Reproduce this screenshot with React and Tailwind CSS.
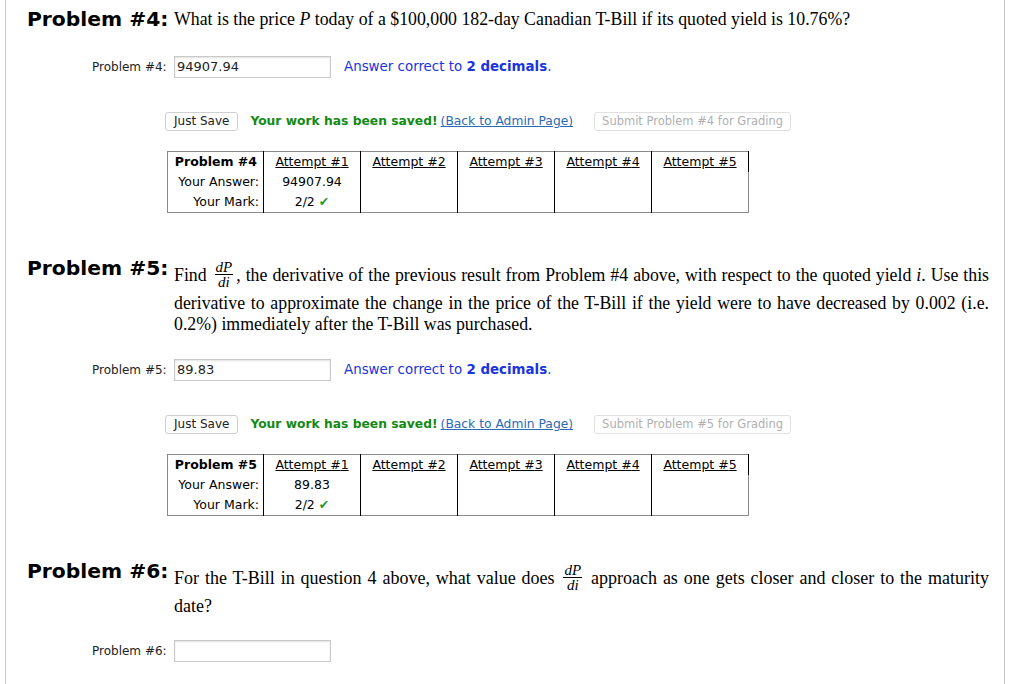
import React from "react";

const sans = { fontFamily: '"DejaVu Sans", Verdana, sans-serif' };
const serif = { fontFamily: '"Liberation Serif", "Times New Roman", serif' };

const Frac = ({ tall }) => (
  <span
    className={`mx-[3px] inline-flex flex-col items-center align-[9px] text-[15px] italic leading-[12px] ${
      tall ? "pb-[5px]" : ""
    }`}
  >
    <span className="border-b border-black px-[1px] pb-[1px]">dP</span>
    <span className="px-[1px] pt-[1px]">di</span>
  </span>
);

const Heading = ({ children }) => (
  <h2
    className="w-[147px] shrink-0 text-[20.3px] font-bold leading-[26px] text-black"
    style={sans}
  >
    {children}
  </h2>
);

const AnswerRow = ({ n, value, hint }) => (
  <div className="flex items-center pl-[65px]" style={sans}>
    <span className="w-[82px] text-[12px] text-[#222]">Problem #{n}:</span>
    <div className="flex h-[22px] w-[157px] items-center border border-[#c9c9c9] bg-white pl-[2px] text-[13px] text-[#222] shadow-[inset_0_1px_2px_rgba(0,0,0,0.12)]">
      {value}
    </div>
    {hint && (
      <span className="ml-[13px] text-[13.4px] text-[#1a33e0]">
        Answer correct to <b>2 decimals</b>.
      </span>
    )}
  </div>
);

const SaveRow = ({ n }) => (
  <div className="mt-[34px] flex items-center pl-[138px] text-[12.3px]" style={sans}>
    <button className="h-[19px] rounded-[3px] border border-[#cfcfcf] bg-white px-[8px] text-[12px] leading-[17px] text-[#222]">
      Just Save
    </button>
    <span className="ml-[12px] font-bold text-[#138a13]">Your work has been saved!</span>
    <a className="ml-[3px] text-[#2a6bb8] underline" href="#">
      (Back to Admin Page)
    </a>
    <button
      disabled
      className="ml-[21px] h-[19px] rounded-[3px] border border-[#e0e0e0] bg-white px-[7px] text-[11.5px] leading-[17px] text-[#b0b0b0]"
    >
      Submit Problem #{n} for Grading
    </button>
  </div>
);

const AttemptTable = ({ n, value }) => (
  <table
    className="ml-[140px] mt-[20px] border-collapse border border-[#8a8a8a] text-[12.5px] leading-[20px] text-black"
    style={sans}
  >
    <tbody>
      <tr>
        <td className="w-[96px] border-r border-black pr-[6px] text-right font-bold">Problem #{n}</td>
        {[1, 2, 3, 4, 5].map((a) => (
          <td key={a} className="w-[97px] border-r border-black text-center align-top">
            <span className="underline">Attempt #{a}</span>
          </td>
        ))}
      </tr>
      <tr>
        <td className="border-r border-black pr-[4px] text-right">Your Answer:</td>
        <td className="border-r border-black text-center">{value}</td>
        <td className="border-r border-black" />
        <td className="border-r border-black" />
        <td className="border-r border-black" />
        <td />
      </tr>
      <tr>
        <td className="border-r border-black pr-[4px] text-right">Your Mark:</td>
        <td className="border-r border-black text-center">
          2/2 <span className="text-[#1f9a1f]">✔</span>
        </td>
        <td className="border-r border-black" />
        <td className="border-r border-black" />
        <td className="border-r border-black" />
        <td />
      </tr>
    </tbody>
  </table>
);

export default function App() {
  return (
    <div className="min-h-screen bg-white">
      <div className="ml-[5px] min-h-[684px] w-[1000px] border-x border-[#c8c8c8] pl-[21px] pr-[15px] pt-[6px]">
        {/* Problem 4 */}
        <div className="flex items-start">
          <Heading>Problem #4:</Heading>
          <p className="pt-[3px] text-[17.8px] leading-[21px]" style={serif}>
            What is the price <i>P</i> today of a $100,000 182-day Canadian T-Bill if its quoted yield is 10.76%?
          </p>
        </div>
        <div className="mt-[24px]">
          <AnswerRow n={4} value="94907.94" hint />
        </div>
        <SaveRow n={4} />
        <AttemptTable n={4} value="94907.94" />

        {/* Problem 5 */}
        <div className="mt-[42px] flex items-start">
          <Heading>Problem #5:</Heading>
          <p className="pt-[6px] text-justify text-[17.8px] leading-[21px]" style={serif}>
            Find <Frac tall />, the derivative of the previous result from Problem #4 above, with respect to the quoted
            yield <i>i</i>. Use this derivative to approximate the change in the price of the T-Bill if the yield were
            to have decreased by 0.002 (i.e. 0.2%) immediately after the T-Bill was purchased.
          </p>
        </div>
        <div className="mt-[24px]">
          <AnswerRow n={5} value="89.83" hint />
        </div>
        <SaveRow n={5} />
        <AttemptTable n={5} value="89.83" />

        {/* Problem 6 */}
        <div className="mt-[42px] flex items-start">
          <Heading>Problem #6:</Heading>
          <p className="pt-[6px] text-justify text-[18px] leading-[28px]" style={serif}>
            For the T-Bill in question 4 above, what value does <Frac /> approach as one gets closer and closer
            to the maturity date?
          </p>
        </div>
        <div className="mt-[20px]">
          <AnswerRow n={6} value="" />
        </div>
      </div>
    </div>
  );
}
